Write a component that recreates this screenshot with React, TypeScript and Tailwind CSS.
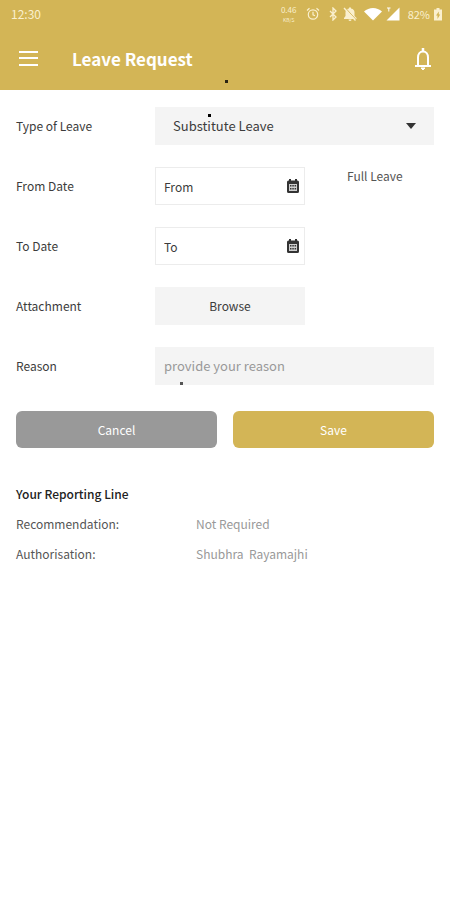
import type { ReactNode } from "react";

type FieldRowProps = {
  label: string;
  htmlFor: string;
  children: ReactNode;
};

function FieldRow({ label, htmlFor, children }: FieldRowProps) {
  return (
    <div className="grid grid-cols-[139px_1fr] items-center">
      <label htmlFor={htmlFor} className="text-xs text-[#3c3c3c]">
        {label}
      </label>
      <div className="relative flex h-[38px]">{children}</div>
    </div>
  );
}

function DateField({ id, placeholder }: { id: string; placeholder: string }) {
  return (
    <div className="flex w-[150px] shrink-0 items-center border border-[#ececec] bg-white pr-1">
      <input
        id={id}
        type="text"
        placeholder={placeholder}
        className="h-full min-w-0 flex-1 bg-transparent pl-2 text-xs text-[#3c3c3c] outline-none placeholder:text-[#3c3c3c]"
      />
      <svg viewBox="0 0 14 16" className="h-4 w-3.5 shrink-0 text-[#333333]" aria-hidden="true">
        <path
          fill="currentColor"
          d="M3 1h2v1.500h4V1h2v1.500h.5A1.500 1.500 0 0 1 13 4v9.500a1.500 1.500 0 0 1-1.500 1.500h-9A1.500 1.500 0 0 1 1 13.500V4a1.500 1.500 0 0 1 1.500-1.500H3z"
        />
        <path fill="#cfcfcf" d="M3 6h8v7H3z" />
        <path
          fill="currentColor"
          d="M4 7h1.500v1.500H4zM6.300 7h1.500v1.500H6.300zM8.600 7h1.500v1.500H8.600zM4 10h1.500v1.500H4zM6.300 10h1.500v1.500H6.300zM8.600 10h1.500v1.500H8.600z"
        />
      </svg>
    </div>
  );
}

function StatusBar() {
  return (
    <div className="flex h-7 items-center justify-between pr-2 pl-[11px] text-xs text-[#faf0cf]">
      <span>12:30</span>
      <div className="flex items-center">
        <span className="mr-2 flex w-[18px] flex-col items-center text-[8px] leading-[12px]">
          <span>0.46</span>
          <span className="text-[5px] leading-[8px]">KB/S</span>
        </span>
        <svg viewBox="0 0 14 14" className="mr-2 size-3.5" fill="none" stroke="currentColor" strokeWidth="1.200" aria-hidden="true">
          <circle cx="7" cy="7.500" r="4.700" />
          <path d="M7 4.800v3l2 1M1 3.500 3.500 1.300M13 3.500l-2.500-2.200" />
        </svg>
        <svg viewBox="0 0 10 14" className="mr-1 h-3.5 w-2.5" fill="none" stroke="currentColor" strokeWidth="1.300" aria-hidden="true">
          <path d="m2 4 6 6-3 3V1l3 3-6 6" />
        </svg>
        <svg viewBox="0 0 16 14" className="mr-1.5 h-3.5 w-4" aria-hidden="true">
          <path
            fill="currentColor"
            d="M7 1.500V.5h2v1c2.500.5 3.500 2 3.500 4V9l2 2v1H2v-1l1.500-2V5.500c0-2 1-3.500 3.500-4zM6.500 12.500h3a1.500 1.500 0 0 1-3 0z"
          />
          <path stroke="#d3b556" d="m3.500 1 10 11" />
          <path stroke="currentColor" strokeWidth="1.400" d="m2 1 11.500 12.500" />
        </svg>
        <svg viewBox="0 0 18 14" className="mr-1 h-3.5 w-[18px] text-white" fill="currentColor" aria-hidden="true">
          <path d="M0 4.500C5-.2 13-.2 18 4.500L9 13.500z" />
        </svg>
        <svg viewBox="0 0 14 14" className="mr-2 size-3.5 text-white" fill="currentColor" aria-hidden="true">
          <path d="M13.500.5v13H.5z" />
          <path stroke="currentColor" fill="none" d="M1 1h3.500M2.800 1v3.500" />
        </svg>
        <span className="mr-1 text-[11px]">82%</span>
        <svg viewBox="0 0 8 14" className="h-3.5 w-2" aria-hidden="true">
          <path fill="currentColor" d="M2.500 1h3v1.500H8v11H0v-11h2.500z" />
          <path fill="#d3b556" d="M4.800 4.500 2 8.500h1.500V12l2.700-4.500H4.800z" />
        </svg>
      </div>
    </div>
  );
}

export default function App() {
  return (
    <div className="min-h-screen bg-white font-['Noto_Sans_CJK_SC','Noto_Sans',sans-serif]">
      <header className="relative h-[90px] bg-[#d3b556] text-white">
        <StatusBar />
        <div className="flex h-[62px] items-center pr-[18px] pl-[19px]">
          <button type="button" aria-label="Menu" className="mr-[34px]">
            <svg viewBox="0 0 19 18" className="h-[18px] w-[19px]" stroke="currentColor" strokeWidth="2" aria-hidden="true">
              <path d="M0 2h19M0 8h19M0 15h19" />
            </svg>
          </button>
          <h1 className="flex-1 text-[17px] font-bold">Leave Request</h1>
          <button type="button" aria-label="Notifications">
            <svg viewBox="0 0 18 24" className="h-6 w-[18px]" fill="none" stroke="currentColor" strokeWidth="2" aria-hidden="true">
              <path d="M4 18.500V10.500c0-3.500 2-6 5-6s5 2.500 5 6v8M1 19h16" />
              <path d="M9 1v3" strokeWidth="2.500" />
              <path d="M7 21h4l-2 2z" fill="currentColor" strokeWidth="1" />
            </svg>
          </button>
        </div>
        <span className="absolute bottom-[7px] left-1/2 size-[3px] bg-[#2b2412]" />
      </header>

      <main className="px-4 pt-[17px]">
        <form className="flex flex-col gap-[22px]" onSubmit={(event) => event.preventDefault()}>
          <FieldRow label="Type of Leave" htmlFor="leave-type">
            <select
              id="leave-type"
              className="w-full appearance-none bg-[#f4f4f4] pr-10 pl-[18px] text-[13px] text-[#3c3c3c] outline-none"
            >
              <option>Substitute Leave</option>
            </select>
            <svg
              viewBox="0 0 10 6"
              className="pointer-events-none absolute top-4 right-[18px] h-1.5 w-2.5 text-[#333333]"
              fill="currentColor"
              aria-hidden="true"
            >
              <path d="M0 0h10L5 6z" />
            </svg>
            <span className="absolute top-[7px] left-[53px] size-[3px] bg-black" />
          </FieldRow>

          <FieldRow label="From Date" htmlFor="from-date">
            <DateField id="from-date" placeholder="From" />
            <span className="pt-px pl-[42px] text-xs text-[#555555]">Full Leave</span>
          </FieldRow>

          <FieldRow label="To Date" htmlFor="to-date">
            <DateField id="to-date" placeholder="To" />
          </FieldRow>

          <FieldRow label="Attachment" htmlFor="attachment">
            <button id="attachment" type="button" className="w-[150px] bg-[#f4f4f4] text-xs text-[#3c3c3c]">
              Browse
            </button>
          </FieldRow>

          <FieldRow label="Reason" htmlFor="reason">
            <input
              id="reason"
              type="text"
              placeholder="provide your reason"
              className="w-full bg-[#f4f4f4] px-[9px] text-[13px] outline-none placeholder:text-[#999999]"
            />
            <span className="absolute bottom-0 left-[25px] size-[3px] bg-[#555555]" />
          </FieldRow>

          <div className="mt-1 grid grid-cols-2 gap-4">
            <button type="button" className="h-[37px] rounded-md bg-[#999999] text-xs text-white">
              Cancel
            </button>
            <button type="submit" className="h-[37px] rounded-md bg-[#d3b556] text-xs text-white">
              Save
            </button>
          </div>
        </form>

        <section className="pt-9">
          <h2 className="text-xs leading-5 font-medium text-[#222222]">Your Reporting Line</h2>
          <dl className="mt-2.5 grid grid-cols-[180px_1fr] gap-y-2.5 text-xs leading-5">
            <dt className="text-[#555555]">Recommendation:</dt>
            <dd className="text-[#999999]">Not Required</dd>
            <dt className="text-[#555555]">Authorisation:</dt>
            <dd className="text-[#999999]">Shubhra &nbsp;Rayamajhi</dd>
          </dl>
        </section>
      </main>
    </div>
  );
}
